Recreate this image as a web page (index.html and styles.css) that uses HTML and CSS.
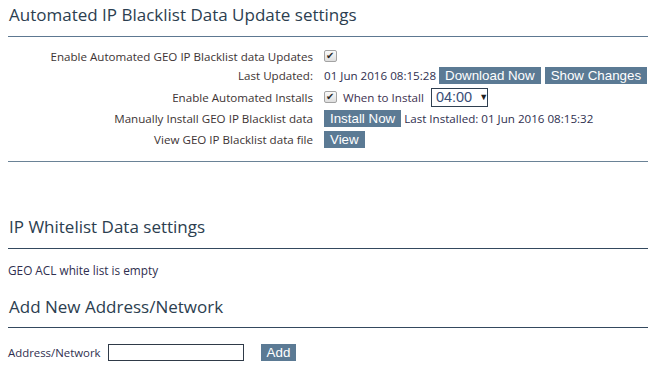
FILE: index.html
```html
<!DOCTYPE html>
<html>
<head>
<meta charset="utf-8">
<link rel="stylesheet" href="styles.css">
</head>
<body>
<div class="page">
  <section class="panel">
    <div class="head"><h2 class="title">Automated IP Blacklist Data Update settings</h2></div>
    <div class="form">
      <div class="lbl">Enable Automated GEO IP Blacklist data Updates</div>
      <div class="ctl"><input type="checkbox" class="chk" checked></div>

      <div class="lbl">Last Updated:</div>
      <div class="ctl"><span class="val">01 Jun 2016 08:15:28</span><button class="btn">Download Now</button><button class="btn">Show Changes</button></div>

      <div class="lbl">Enable Automated Installs</div>
      <div class="ctl"><input type="checkbox" class="chk" checked><span class="val when">When to Install</span><span class="sel"><span class="sel-val">04:00</span><span class="sel-arrow">&#9660;</span></span></div>

      <div class="lbl">Manually Install GEO IP Blacklist data</div>
      <div class="ctl"><button class="btn">Install Now</button><span class="val">Last Installed: 01 Jun 2016 08:15:32</span></div>

      <div class="lbl">View GEO IP Blacklist data file</div>
      <div class="ctl"><button class="btn">View</button></div>
    </div>
  </section>

  <section class="whitelist">
    <div class="head"><h2 class="title">IP Whitelist Data settings</h2></div>
    <p class="note">GEO ACL white list is empty</p>
    <div class="head head-add"><h2 class="title">Add New Address/Network</h2></div>
    <div class="addrow">
      <span class="addlbl">Address/Network</span>
      <input type="text" class="addinput">
      <button class="btn btn-add">Add</button>
    </div>
  </section>
</div>
</body>
</html>
```

FILE: styles.css
```css
html, body {
  margin: 0;
  padding: 0;
  background: #ffffff;
}
body {
  font-family: "Open Sans", "Noto Sans", sans-serif;
  color: #3b3535;
}
.page {
  padding-left: 8px;
}
.head {
  padding: 5px 0 11px 1px;
  border-bottom: 1px solid #5d7891;
}
.title {
  margin: 0;
  font-size: 17px;
  line-height: 20px;
  font-weight: 400;
  color: #2c3e50;
}
.panel {
  border-bottom: 1px solid #6a8296;
  padding-bottom: 13px;
}
.form {
  margin-top: 11px;
  display: grid;
  grid-template-columns: 305px minmax(0, 1fr);
  grid-template-rows: 16px 19px 20px 19px 18px;
  column-gap: 11px;
  row-gap: 2px;
  font-size: 11.6px;
}
.lbl {
  display: flex;
  align-items: center;
  justify-content: flex-end;
  color: #3d3434;
  white-space: nowrap;
}
.ctl {
  display: flex;
  align-items: center;
  gap: 3px;
  white-space: nowrap;
}
.ctl > * {
  flex-shrink: 0;
}
.ctl .btn + .btn {
  margin-left: 1px;
}
.val {
  color: #2f2f4f;
}
.when {
  margin-left: 3px;
  margin-right: 4px;
  color: #3d3150;
}
.chk {
  appearance: none;
  -webkit-appearance: none;
  margin: 0;
  width: 13px;
  height: 12px;
  border: 1px solid #a3a3a3;
  border-radius: 2px;
  background: linear-gradient(#fbfbfb, #dedede);
  position: relative;
  box-sizing: border-box;
}
.chk::after {
  content: "\2714";
  position: absolute;
  left: 1px;
  top: 0;
  font-family: "DejaVu Sans", sans-serif;
  font-size: 10px;
  line-height: 10px;
  color: #2a2a2a;
}
.btn {
  font-family: "Liberation Sans", Arial, sans-serif;
  font-size: 13.33px;
  line-height: 17px;
  height: 17px;
  padding: 0 6px;
  margin: 0;
  border: 0;
  background: #5b7a94;
  color: #ffffff;
}
.sel {
  display: inline-flex;
  align-items: center;
  box-sizing: border-box;
  width: 57px;
  height: 19px;
  border: 1px solid #2f3f50;
  padding: 0 0 0 4px;
  gap: 7px;
  font-family: "Liberation Sans", Arial, sans-serif;
  color: #3a4f78;
}
.sel-val {
  font-size: 14.5px;
}
.sel-arrow {
  font-size: 9px;
  color: #222;
}
.note {
  margin: 14px 0 0 0;
  font-size: 11.8px;
  line-height: 14px;
  color: #2f2f4f;
}
.head-add {
  margin-top: 15px;
  padding-bottom: 10px;
  border-bottom-color: #34495e;
}
.whitelist {
  margin-top: 50px;
}
.whitelist > .head:first-child {
  border-bottom-color: #34495e;
}
.addrow {
  margin-top: 16px;
  display: flex;
  align-items: center;
  font-size: 11.4px;
}
.addlbl {
  color: #2f2f4f;
}
.addinput {
  margin: 0 0 0 7px;
  width: 136px;
  height: 17px;
  box-sizing: border-box;
  border: 1px solid #2f3a48;
  padding: 0;
}
.btn-add {
  margin-left: 17px;
}
```
